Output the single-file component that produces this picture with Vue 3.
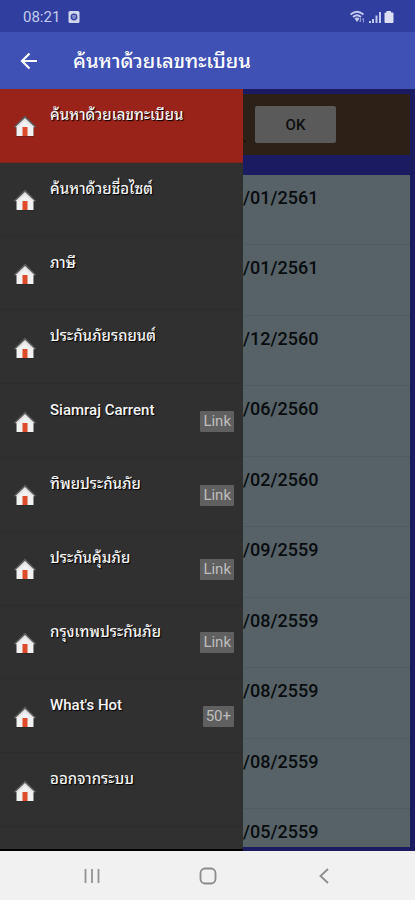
<script setup>
const items = [
  { title: 'ค้นหาด้วยเลขทะเบียน', active: true },
  { title: 'ค้นหาด้วยชื่อไซต์' },
  { title: 'ภาษี' },
  { title: 'ประกันภัยรถยนต์' },
  { title: 'Siamraj Carrent', badge: 'Link' },
  { title: 'ทิพยประกันภัย', badge: 'Link' },
  { title: 'ประกันคุ้มภัย', badge: 'Link' },
  { title: 'กรุงเทพประกันภัย', badge: 'Link' },
  { title: "What's Hot", badge: '50+' },
  { title: 'ออกจากระบบ' },
]

const dates = [
  '/01/2561', '/01/2561', '/12/2560', '/06/2560', '/02/2560',
  '/09/2559', '/08/2559', '/08/2559', '/08/2559', '/05/2559',
]
</script>

<template>
  <div class="screen">
    <div class="status">
      <span class="clock">08:21</span>
      <svg class="notice" viewBox="0 0 12 12" width="12" height="12">
        <rect x="0.5" y="0" width="11" height="12" rx="1.5" fill="#d0d5f0" />
        <circle cx="6" cy="6" r="3.4" fill="#3542a0" />
        <path d="M4 5h4M4.5 7h3" stroke="#d0d5f0" stroke-width="1" />
      </svg>
      <svg class="signals" viewBox="0 0 46 16" width="46" height="16">
        <g fill="none" stroke="#c3c9ec" stroke-width="1.7">
          <path d="M1.5 5.5Q8 0 14.500 5.500" />
          <path d="M4 8Q8 4.500 12 8" />
        </g>
        <path d="M5.500 9.500Q8 7.500 10.500 9.500L8 13Z" fill="#c3c9ec" />
        <path d="M11.500 9v4M10 11.500l1.500 1.500M14.500 13.500v-4M13 11l1.500-1.500" fill="none" stroke="#8e99d4" stroke-width="1" />
        <path d="M20 12h2v2h-2zM23 10h2v4h-2zM26.500 6.500h2V14h-2zM30 3h2v11h-2z" fill="#c3c9ec" />
        <path d="M37.500 2h4.500v1.500h1.500a1 1 0 0 1 1 1V13a1 1 0 0 1-1 1h-7a1 1 0 0 1-1-1V4.500a1 1 0 0 1 1-1h1z" fill="#dde0f5" />
      </svg>
    </div>

    <header class="bar">
      <button class="back" type="button" aria-label="Back">
        <svg viewBox="0 0 18 18" width="18" height="18">
          <path d="M17 9H2.500M9.500 1.500L2 9l7.500 7.500" fill="none" stroke="#fff" stroke-width="2.200" />
        </svg>
      </button>
      <h1>ค้นหาด้วยเลขทะเบียน</h1>
    </header>

    <div class="body">
      <nav class="drawer">
        <a v-for="item in items" :key="item.title" href="#" class="item" :class="{ active: item.active }">
          <svg class="home" viewBox="0 0 24 24" width="24" height="24">
            <path d="M3 13v9.500h18V13" fill="#1c1c1c" opacity="0.5" />
            <path d="M3.500 12L12 3.500l8.500 8.500v10h-17z" fill="#f1f1f1" />
            <path d="M0.500 13L12 1.500 23.500 13l-2.500.4L12 5l-9 8.400z" fill="#5b5b5b" />
            <path d="M2.500 13L12 4l9.500 9-2 .4L12 7l-7.500 6.400z" fill="#e4e4e4" />
            <rect x="9.500" y="13" width="5" height="9" fill="#dd4b2b" />
          </svg>
          <span class="title">{{ item.title }}</span>
          <span v-if="item.badge" class="badge">{{ item.badge }}</span>
        </a>
      </nav>

      <main class="content">
        <div class="search">
          <span class="dot">.</span>
          <button class="ok" type="button">OK</button>
        </div>
        <ul class="dates">
          <li v-for="(date, i) in dates" :key="i">{{ date }}</li>
        </ul>
      </main>
    </div>

    <footer class="system">
      <button type="button" aria-label="Recent apps">
        <svg viewBox="0 0 18 18" width="18" height="18">
          <path d="M2.500 2v14M9 2v14M15.500 2v14" stroke="#929292" stroke-width="1.800" />
        </svg>
      </button>
      <button type="button" aria-label="Home">
        <svg viewBox="0 0 18 18" width="18" height="18">
          <rect x="1.500" y="1.500" width="15" height="15" rx="4.500" fill="none" stroke="#8c8c8c" stroke-width="1.800" />
        </svg>
      </button>
      <button type="button" aria-label="Back">
        <svg viewBox="0 0 18 18" width="18" height="18">
          <path d="M13 2L5.500 9l7.500 7" fill="none" stroke="#8c8c8c" stroke-width="1.800" />
        </svg>
      </button>
    </footer>
  </div>
</template>

<style>
body {
  margin: 0;
}
</style>

<style scoped>
.screen {
  display: flex;
  flex-direction: column;
  height: 100vh;
  overflow: hidden;
  font-family: Roboto, "Noto Sans Thai Looped", Loma, Waree, "Noto Sans Thai", "Noto Sans", sans-serif;
}

button {
  padding: 0;
  border: 0;
  background: none;
  font: inherit;
}

svg {
  display: block;
}

.status {
  display: flex;
  align-items: center;
  box-sizing: border-box;
  height: 32px;
  padding: 2px 20px 0 23px;
  background: #303f9f;
}

.clock {
  color: #c5cbed;
  font-size: 15px;
  line-height: 20px;
}

.notice {
  margin-left: 8px;
}

.signals {
  margin-left: auto;
}

.bar {
  display: flex;
  align-items: center;
  gap: 35px;
  height: 57px;
  padding: 0 20px;
  background: #3f51b5;
}

.bar h1 {
  margin: 0;
  color: #fff;
  font-size: 20px;
  font-weight: 500;
  line-height: 28px;
  white-space: nowrap;
}

.body {
  display: grid;
  grid-template-columns: 243px 1fr;
  flex: 1;
  min-height: 0;
}

.drawer {
  display: grid;
  grid-template-rows: repeat(10, 1fr);
  padding-bottom: 22px;
  border-bottom: 2px solid #000;
  background: #303030;
}

.item {
  display: flex;
  align-items: center;
  box-sizing: border-box;
  min-height: 0;
  padding: 2px 9px 0 13px;
  border-bottom: 1px solid #2c2c2c;
  color: #f5f5f5;
  text-decoration: none;
}

.item.active {
  border-color: #7d241b;
  background: #992318;
}

.title {
  flex: 1;
  align-self: flex-start;
  margin-left: 13px;
  padding-top: 13px;
  font-size: 15px;
  font-weight: 500;
  line-height: 22px;
  white-space: nowrap;
  text-shadow: 1px 1px 1px #000;
}

.badge {
  padding: 0 3px;
  border-radius: 1px;
  background: #606060;
  color: #bdbdbd;
  font-size: 15px;
  line-height: 21px;
}

.content {
  display: flex;
  flex-direction: column;
  min-width: 0;
  padding: 5px 5px 4px 0;
  background: #1b1b62;
}

.search {
  display: flex;
  align-items: center;
  gap: 7px;
  height: 61px;
  background: #2d2017;
}

.dot {
  align-self: flex-end;
  width: 5px;
  padding-bottom: 10px;
  color: #000;
  font-size: 14px;
  line-height: 16px;
}

.ok {
  width: 81px;
  height: 37px;
  border-radius: 2px;
  background: #5a5a5a;
  color: #0d0d0d;
  font-size: 15px;
  font-weight: 500;
}

.dates {
  display: grid;
  grid-template-rows: repeat(9, 1fr) 38px;
  flex: 1;
  min-height: 0;
  margin: 20px 0 0;
  padding: 0;
  background: #566266;
  list-style: none;
}

.dates li {
  box-sizing: border-box;
  min-height: 0;
  padding-top: 12px;
  border-bottom: 1px solid #4f5b5f;
  color: #080c0e;
  font-size: 18px;
  font-weight: 500;
  line-height: 22px;
}

.dates li:last-child {
  border-bottom: 0;
}

.system {
  display: flex;
  align-items: center;
  justify-content: center;
  gap: 98px;
  height: 49px;
  background: #f1f1f1;
}
</style>
